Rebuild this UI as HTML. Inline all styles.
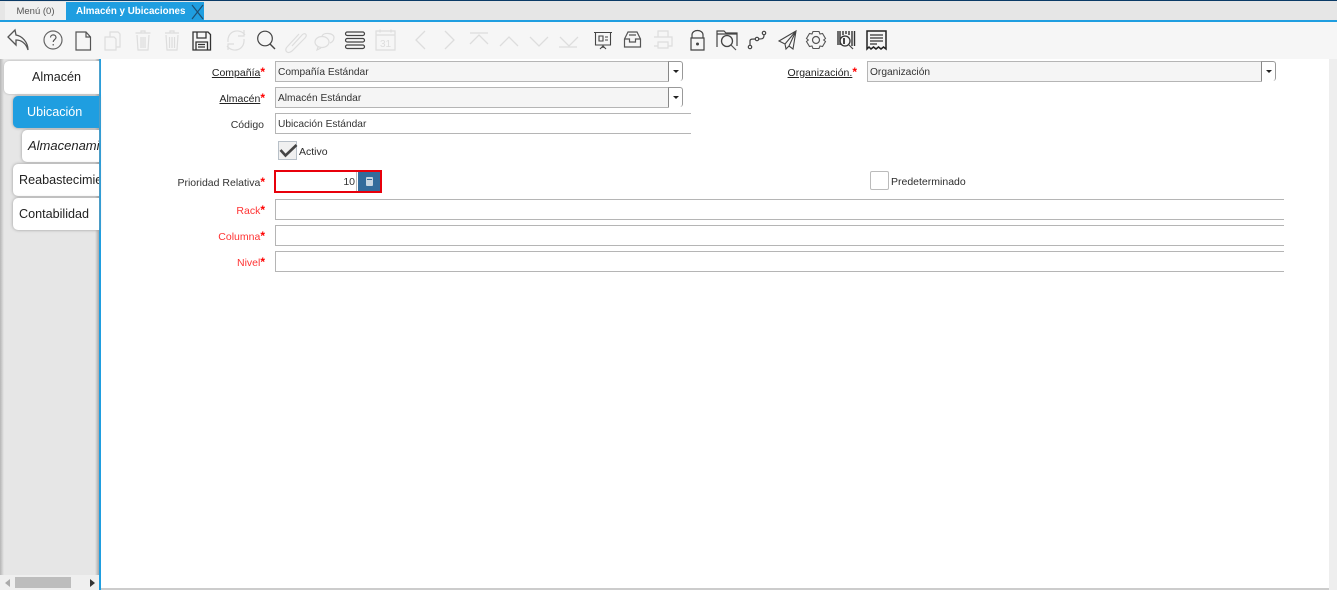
<!DOCTYPE html>
<html><head><meta charset="utf-8"><style>
html,body{margin:0;padding:0;background:#fff}
body{position:relative;width:1337px;height:590px;overflow:hidden;font-family:"Liberation Sans",sans-serif;font-size:10.5px;color:#2c2c2c}
div,span{position:absolute;box-sizing:border-box;white-space:nowrap}
.lb{text-align:right;height:14px;line-height:16px;color:#333;right:auto}
.lb i{font-style:normal;color:#f00;font-weight:bold;font-size:12px;line-height:10px}
.u{text-decoration:underline;position:static;color:#222}
.r{color:#f33}
.f{border:1px solid #b5b5b5;border-right:none;border-top:1px solid #b5b5b5;height:21px;line-height:21px;padding-left:2px;background:#fff;color:#333;font-size:10.2px}
.g{background:#f5f5f5}
.dd{background:#fff;border:1px solid #999;border-left:1px solid #888;border-radius:0 3px 3px 0;border-bottom:none;width:15px;height:20px}
.dd:after{content:"";position:absolute;left:4px;top:8px;border:3px solid transparent;border-top:3px solid #222;border-bottom:none}
.tab{left:13px;width:87px;height:32px;background:#fff;border-radius:5px 0 0 5px;box-shadow:0 0 3px #999;font-size:12.6px;line-height:32px;padding-left:6px;color:#222;overflow:hidden}
svg{position:absolute;left:0;top:0}
</style></head><body>
<div style="left:0;top:0;width:1337px;height:1px;background:#0a3a66"></div>
<div style="left:0;top:1px;width:1337px;height:19px;background:#e6e6e6"></div>
<div style="left:5px;top:2px;width:61px;height:18px;background:#f0f0f0;text-align:center;line-height:19px;font-size:9.5px;color:#555">Menú (0)</div>
<div style="left:66px;top:2px;width:138px;height:18px;background:#1f9ee0;color:#fff;font-weight:bold;font-size:9.8px;line-height:20px;padding-left:10px">Almacén y Ubicaciones</div>
<div style="left:0;top:20px;width:1337px;height:2px;background:#1f9ee0"></div>
<div style="left:0;top:22px;width:1337px;height:37px;background:#f6f6f6"></div>

<div style="left:0;top:59px;width:99px;height:516px;background:linear-gradient(90deg,#b5b5b5 0,#e6e6e6 4px,#e6e6e6 95px,#a8a8a8 99px)"></div>
<div style="left:0;top:575px;width:99px;height:15px;background:#efefef"></div>
<div style="left:15px;top:577px;width:56px;height:11px;background:#bdbdbd"></div>
<div style="left:5px;top:579px;width:0;height:0;border:4px solid transparent;border-right:5px solid #aaa;border-left:none"></div>
<div style="left:90px;top:579px;width:0;height:0;border:4px solid transparent;border-left:5px solid #333;border-right:none"></div>
<div style="left:99px;top:59px;width:2px;height:531px;background:#1f9ee0"></div>
<div style="left:101px;top:588px;width:1228px;height:2px;background:#ccc"></div>
<div style="left:1329px;top:59px;width:8px;height:531px;background:#eee"></div>

<div class="tab" style="left:4px;top:61px;width:95px;height:33px;padding-left:28px;box-shadow:0 0 2px #aaa;line-height:33px">Almacén</div>
<div class="tab" style="top:96px;width:86px;height:32px;background:#1f9ee0;color:#fff;padding-left:14px">Ubicación</div>
<div class="tab" style="left:22px;top:130px;width:77px;font-style:italic;font-size:13px;padding-left:6px">Almacenamiento</div>
<div class="tab" style="top:164px;width:86px">Reabastecimiento</div>
<div class="tab" style="top:198px;width:86px">Contabilidad</div>

<div class="lb" style="left:150px;width:115px;top:65px"><span class="u">Compañía</span><i>*</i></div>
<div class="lb" style="left:150px;width:115px;top:91px"><span class="u">Almacén</span><i>*</i></div>
<div class="lb" style="left:150px;width:115px;top:117px;padding-right:1px">Código</div>
<div class="lb" style="left:150px;width:115px;top:175px">Prioridad Relativa<i>*</i></div>
<div class="lb r" style="left:150px;width:115px;top:203px">Rack<i>*</i></div>
<div class="lb r" style="left:150px;width:115px;top:229px">Columna<i>*</i></div>
<div class="lb r" style="left:150px;width:115px;top:255px">Nivel<i>*</i></div>
<div class="lb" style="left:760px;width:97px;top:65px"><span class="u">Organización.</span><i>*</i></div>

<div class="f g" style="left:275px;top:61px;width:394px">Compañía Estándar</div><div class="dd" style="left:668px;top:61px"></div>
<div class="f g" style="left:275px;top:87px;width:394px">Almacén Estándar</div><div class="dd" style="left:668px;top:87px"></div>
<div class="f" style="left:275px;top:113px;width:416px">Ubicación Estándar</div>
<div class="f g" style="left:867px;top:61px;width:395px">Organización</div><div class="dd" style="left:1261px;top:61px"></div>

<div style="left:278px;top:141px;width:19px;height:19px;background:#f0f0f0;border:1px solid #b8c0c8"></div>
<svg width="1337" height="590" style="pointer-events:none"><path d="M280.500 150l5 5.500 11-10.500" fill="none" stroke="#444" stroke-width="2.600"/></svg>
<div style="left:299px;top:145px;line-height:14px">Activo</div>

<div style="left:274px;top:170px;width:108px;height:23px;border:2px solid #e8000b;background:#fff"></div>
<div style="left:276px;top:172px;width:81px;height:19px;text-align:right;padding-right:1px;line-height:21px;border-right:1px solid #bbb;color:#333;font-size:10.5px">10</div>
<div style="left:358px;top:172px;width:22px;height:19px;background:#336b9b"></div>
<div style="left:366px;top:177px;width:7px;height:9px;background:#c8d6e2;border-radius:1px"></div>
<div style="left:367px;top:179px;width:5px;height:1px;background:#336b9b"></div>

<div style="left:870px;top:171px;width:19px;height:19px;border:1px solid #bbb;border-radius:2px;background:#fff"></div>
<div style="left:891px;top:175px;line-height:14px">Predeterminado</div>

<div class="f" style="left:275px;top:199px;width:1009px"></div>
<div class="f" style="left:275px;top:225px;width:1009px"></div>
<div class="f" style="left:275px;top:251px;width:1009px"></div>

<svg width="1337" height="590" fill="none" stroke="#444" stroke-width="1.200">
<!-- close -->
<path d="M192 5l11 14M203 5l-11 14" stroke="#1d4f73" stroke-width="1.200"/>
<!-- back -->
<path d="M28 50C28 42 22 36 16 35L15 30 8 37 16 45 16 40C21 40 26 43 28 50z" stroke="#555" stroke-width="1.300"/>
<!-- help -->
<circle cx="53" cy="40" r="9" stroke="#666"/>
<path d="M50.500 37.500c0-3.500 5.500-3.500 5.500 0 0 2-2.800 2-2.800 4.500M53.200 44v1.500" stroke="#555"/>
<!-- new -->
<path d="M76 32h10l4.500 5v13h-14.500zM86 32v5h4.500" stroke="#555"/>
<g stroke="#ddd">
<!-- copy -->
<path d="M110 37v-5h8l2 2v13h-4M105 37h9l2 2v11h-11z"/>
<!-- delete -->
<path d="M135.500 33h15M141 33v-2h4v2M137 35l1 15h10l1-15M141 37v11M143 37v11M145 37v11"/>
<path d="M165 33h14M170 33v-2h4v2M166 35l1 15h10l1-15M169.500 37v11M172 37v11M174.500 37v11"/>
<!-- refresh -->
<path d="M228 42c-1-12 12-14 17-7M244 30v6h-6M244 39c1 12-12 14-17 7M228 50v-6h6"/>
<!-- attach -->
<path d="M292 46l10-11c3-3 6 0 3 3l-13 13c-5 4-8-1-5-4l12-13"/>
<!-- chat -->
<ellipse cx="322" cy="42" rx="7" ry="5.500"/>
<path d="M322 36c2-4 11-3 12 1 0 3-1 5-4 6M318 47l-1 3 4-2"/>
<!-- calendar -->
<path d="M376 31h19v19h-19zM376 35h19M380 29.500v3M391 29.500v3"/>
</g>
<text x="380" y="47" font-size="10" fill="#ddd" stroke="none" font-family="Liberation Sans">31</text>
<!-- search -->
<circle cx="265" cy="38.500" r="7.300" stroke="#444" stroke-width="1.200"/>
<path d="M270 44l5 5" stroke="#444" stroke-width="1.400"/>
<!-- save -->
<path d="M193 32h15l2.500 2.500v15.500h-17.500zM197 32v6h9v-6M196 50v-8h11.500v8M198 44.500h7M198 47h7" stroke="#333" stroke-width="1.300"/>
<!-- menu -->
<rect x="345.500" y="32" width="19" height="3.500" rx="1.700" stroke="#444"/>
<rect x="345.500" y="38.500" width="19" height="3.500" rx="1.700" stroke="#444"/>
<rect x="345.500" y="45" width="19" height="3.500" rx="1.700" stroke="#444"/>
<!-- nav -->
<g stroke="#ddd" stroke-width="1.300">
<path d="M425 31l-9 9 9 9M445 31l9 9-9 9M470 33h18M470 44l9-9 9 9M500 46l9-9 9 9M530 37l9 9 9-9M560 37l9 9 9-9M559 47h18"/>
<!-- printer -->
<path d="M658 37v-6h10v6M654 37h18v9h-4M658 46h-4M658 42h10v6h-10z" stroke-width="1.200"/>
</g>
<!-- presentation -->
<path d="M594 32.500h18M595.500 33v12h15v-12M599 36h4v5h-4zM605 37h3M605 40h3M603 45v3M600 49l3-3 3 3" stroke="#444" stroke-width="1.100"/>
<!-- tray -->
<path d="M628 32h9l3.500 7v8h-16v-8zM624.500 39h5v3h6v-3h5M629 35h7" stroke="#555" stroke-width="1.200"/>
<!-- lock -->
<path d="M692 38v-3c0-6 11-6 11 0v3M691 38h13v12h-13z" stroke="#444" stroke-width="1.200"/>
<circle cx="697.500" cy="44" r="1.500" fill="#444" stroke="none"/>
<!-- folder search -->
<path d="M717 47v-16h7l2 2h11v13M717 34h20" stroke="#444" stroke-width="1.200"/>
<circle cx="727" cy="41" r="5.500" stroke="#444" stroke-width="1.300"/>
<path d="M731 45l5 5" stroke="#555"/>
<!-- route -->
<circle cx="750" cy="47" r="1.700" stroke="#444"/><circle cx="757" cy="39" r="1.700" stroke="#444"/><circle cx="764" cy="33" r="1.700" stroke="#444"/>
<path d="M750 45v-4c0-2 2-2 5-2M759 39c3 0 5 0 5-4" stroke="#444"/>
<!-- send -->
<path d="M796 31l-17 10 6 3 1 5 3-3 4 3zM796 31l-11 13M796 31l-7 15" stroke="#444" stroke-width="1.100"/>
<!-- gear -->
<circle cx="816" cy="40" r="3.500" stroke="#555" stroke-width="1.200"/>
<path d="M813 31.500h6l1 2.500 2.500-.5 3 5-1.800 1.500 1.800 1.500-3 5-2.500-.5-1 2.500h-6l-1-2.500-2.500.5-3-5 1.800-1.500-1.800-1.500 3-5 2.500.5z" stroke="#555" stroke-width="1.100"/>
<!-- barcode -->
<path d="M838 31v14M840 31v14M843 31v4M846 31v3M849 31v4M852 31v15M854.500 31v15" stroke="#333" stroke-width="1.400"/>
<circle cx="845" cy="41" r="5" stroke="#333" stroke-width="1.300"/>
<path d="M849 45l4 4" stroke="#444"/>
<path d="M844 38v6" stroke="#444" stroke-width="2"/>
<!-- receipt -->
<path d="M867 31h19v18l-2.500-2-2.500 2-2.500-2-2.500 2-2.500-2-2.500 2-2-2-2 2z" stroke="#222" stroke-width="1.500"/>
<path d="M870 35h13M870 38h13M870 41h13M870 44h7" stroke="#333"/>
</svg>
</body></html>
